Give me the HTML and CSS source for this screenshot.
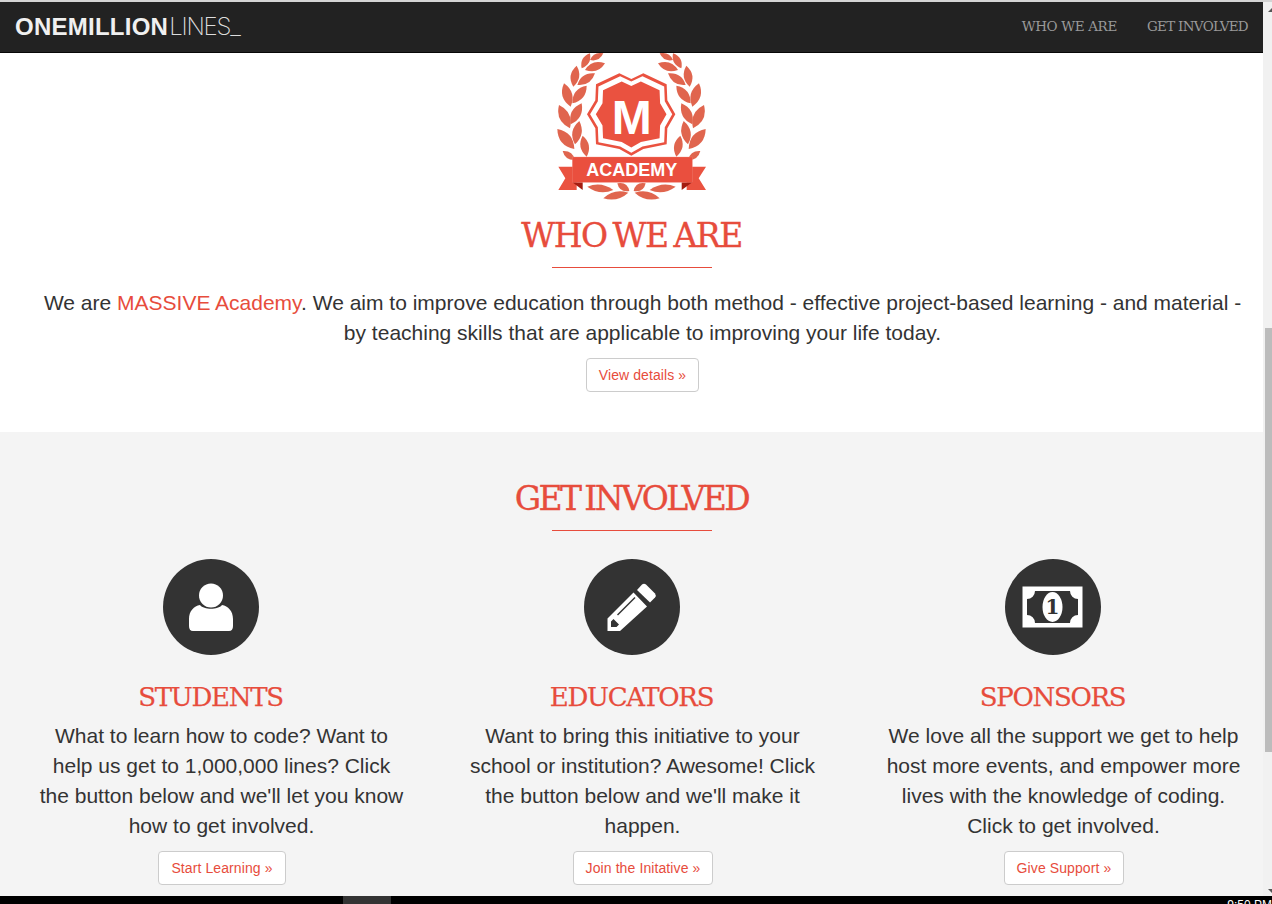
FILE: index.html
```html
<!DOCTYPE html>
<html lang="en">
<head>
<meta charset="utf-8">
<title>One Million Lines</title>
<link rel="stylesheet" href="styles.css">
</head>
<body>
<div class="topline"></div>
<div class="window">
  <div class="page">
    <nav class="navbar">
      <a class="brand" href="#"><b>ONEMILLION</b><span>LINES_</span></a>
      <div class="navlinks">
        <a href="#">WHO WE ARE</a>
        <a href="#">GET INVOLVED</a>
      </div>
    </nav>
    <main class="content">
      <section class="about">
        <svg class="logo" viewBox="51 21 450 444" width="150" height="148" aria-label="Massive Academy">
          <defs>
            <g id="leaves">
              <path d="M125 70Q118 37 150 25Q156 58 125 70Z"/>
              <path d="M150 45Q161 19 190 25Q178 51 150 45Z"/>
              <path d="M135 75Q156 41 195 55Q174 89 135 75Z"/>
              <path d="M100 125Q79 90 110 62Q130 97 100 125Z"/>
              <path d="M112 120Q124 81 165 85Q152 124 112 120Z"/>
              <path d="M92 185Q53 158 72 115Q110 142 92 185Z"/>
              <path d="M97 175Q97 130 140 122Q140 165 97 175Z"/>
              <path d="M90 250Q45 228 57 180Q101 201 90 250Z"/>
              <path d="M92 238Q83 193 125 175Q133 220 92 238Z"/>
              <path d="M103 312Q53 302 52 252Q101 261 103 312Z"/>
              <path d="M105 298Q83 258 118 228Q138 268 105 298Z"/>
              <path d="M140 335Q109 307 128 272Q159 298 140 335Z"/>
              <path d="M105 345Q75 346 68 318Q98 316 105 345Z"/>
              <path d="M142 425Q183 408 220 435Q179 452 142 425Z"/>
              <path d="M232 415Q262 409 268 438Q238 443 232 415Z"/>
              <path d="M190 460Q222 430 265 443Q233 472 190 460Z"/>
            </g>
            <path id="badge" d="M238 85L274 102L310 85L380 118L382 166L406 208L382 250L380 298L310 312L274 332L238 312L168 298L166 250L141 208L166 166L168 118Z"/>
          </defs>
          <g class="logo-leaf">
            <use href="#leaves"/>
            <use href="#leaves" transform="translate(549 0) scale(-1 1)"/>
          </g>
          <use href="#badge" class="logo-red"/>
          <use href="#badge" class="logo-white" transform="translate(273.5 208) scale(.93) translate(-273.5 -208)"/>
          <use href="#badge" class="logo-red" transform="translate(273.5 208) scale(.8) translate(-273.5 -208)"/>
          <text x="275" y="268" text-anchor="middle" class="logo-m">M</text>
          <path class="logo-red" d="M55 365H110V435H55L76 400Z"/>
          <path class="logo-red" d="M498 365H440V435H498L476 400Z"/>
          <path class="logo-dark" d="M97 412H128V435Z"/>
          <path class="logo-dark" d="M457 412H425V435Z"/>
          <rect class="logo-band" x="97" y="336" width="360" height="76"/>
          <text x="275" y="392" text-anchor="middle" class="logo-academy">ACADEMY</text>
        </svg>
        <h2 class="heading">WHO WE ARE</h2>
        <div class="rule"></div>
        <p class="lead">We are <a href="#">MASSIVE Academy</a>. We aim to improve education through both method - effective project-based learning - and material - by teaching skills that are applicable to improving your life today.</p>
        <div class="lead-action"><a class="btn" href="#">View details »</a></div>
      </section>
      <section class="involved">
        <h2 class="heading heading-tight">GET INVOLVED</h2>
        <div class="rule"></div>
        <div class="columns">
          <article class="col">
            <div class="icon">
              <svg viewBox="0 0 96 96" width="96" height="96">
                <circle cx="48" cy="36.5" r="12"/>
                <path d="M30 72Q26 72 26 67V60C26 52 31 47 37 46C41 51 55 51 59 46C65 47 70 52 70 60V67Q70 72 66 72Z"/>
              </svg>
            </div>
            <h3>STUDENTS</h3>
            <p>What to learn how to code? Want to help us get to 1,000,000 lines? Click the button below and we'll let you know how to get involved.</p>
            <div class="action"><a class="btn" href="#">Start Learning »</a></div>
          </article>
          <article class="col">
            <div class="icon">
              <svg viewBox="0 0 96 96" width="96" height="96">
                <path d="M53 31L58 25.500Q60 24 62 25.500L71 34.500Q72.500 36.500 71 38.500L66 43.500Z"/>
                <path fill-rule="evenodd" d="M49.500 33.500L63 47.500L36 72H23.500V59.500ZM50.500 38L33 55.500L34 56.500L51.500 39ZM27 62.500V68H32.500L35 65.500L29.500 60Z"/>
              </svg>
            </div>
            <h3>EDUCATORS</h3>
            <p>Want to bring this initiative to your school or institution? Awesome! Click the button below and we'll make it happen.</p>
            <div class="action"><a class="btn" href="#">Join the Initative »</a></div>
          </article>
          <article class="col">
            <div class="icon">
              <svg viewBox="0 0 96 96" width="96" height="96">
                <path fill-rule="evenodd" d="M17.500 27.500H77.500V68.500H17.500ZM30 32H65A8 8 0 0 0 73 40V56A8 8 0 0 0 65 64H30A8 8 0 0 0 22 56V40A8 8 0 0 0 30 32Z"/>
                <ellipse cx="47.500" cy="48" rx="10" ry="15"/>
                <text x="47.500" y="55" text-anchor="middle" class="bill-digit">1</text>
              </svg>
            </div>
            <h3>SPONSORS</h3>
            <p>We love all the support we get to help host more events, and empower more lives with the knowledge of coding. Click to get involved.</p>
            <div class="action"><a class="btn" href="#">Give Support »</a></div>
          </article>
        </div>
      </section>
    </main>
  </div>
  <div class="scrollbar">
    <div class="arrow arrow-up"></div>
    <div class="thumb"></div>
    <div class="arrow arrow-down"></div>
  </div>
</div>
<footer class="taskbar">
  <div class="task"></div>
  <div class="clock">9:50 PM</div>
</footer>
</body>
</html>
```

FILE: styles.css
```css
* { box-sizing: border-box; }
html, body { margin: 0; height: 904px; overflow: hidden; }
body {
  display: flex;
  flex-direction: column;
  background: #fff;
  color: #333;
  font-family: "Liberation Sans", Arial, sans-serif;
}
a { text-decoration: none; color: #e74c3c; }

.topline { height: 2px; background: #d4d4d4; flex: none; }
.window { flex: 1; display: flex; min-height: 0; }
.page { flex: 1; min-width: 0; display: flex; flex-direction: column; overflow: hidden; }

.navbar {
  flex: none;
  height: 51px;
  background: #222;
  border-bottom: 1px solid #080808;
  display: flex;
  align-items: center;
  justify-content: space-between;
  padding: 0 15px;
}
.brand { font-size: 24px; line-height: 48px; color: #f0f0f0; }
.brand b { font-family: "Liberation Sans", Arial, sans-serif; font-weight: 700; letter-spacing: .25px; }
.brand span { font-family: Inter, sans-serif; font-weight: 200; letter-spacing: -1.2px; color: #ddd; margin-left: 1px; }
.navlinks { display: flex; gap: 30px; padding-bottom: 2px; }
.navlinks a {
  font-family: "DejaVu Serif", serif;
  font-size: 13.500px;
  color: #999;
  letter-spacing: -.35px;
}
.navlinks a + a { letter-spacing: -.7px; }

.content { flex: 1; display: flex; flex-direction: column; min-height: 0; }
.about {
  flex: none;
  height: 379px;
  display: flex;
  flex-direction: column;
  align-items: center;
  background: #fff;
}
.logo { display: block; flex: none; margin-top: -1px; }
.logo-leaf { fill: #e0654e; }
.logo-red { fill: #ea5240; }
.logo-white { fill: #fff; }
.logo-band { fill: #ea4f3e; stroke: #f08a7c; stroke-width: 1; }
.logo-dark { fill: #a31c10; }
.logo-m, .logo-academy { fill: #fff; font-family: "Liberation Sans", Arial, sans-serif; font-weight: 700; }
.logo-m { font-size: 144px; }
.logo-academy { font-size: 54px; }

.heading {
  margin: 16px 0 0;
  font-family: "DejaVu Serif", serif;
  font-weight: 400;
  font-size: 33px;
  line-height: 40px;
  color: #e74c3c;
  letter-spacing: -1.5px;
  word-spacing: -3px;
  -webkit-text-stroke: .35px #e74c3c;
}
.heading-tight { letter-spacing: -2.6px; }
.rule { width: 160px; height: 1px; background: #e74c3c; margin-top: 11px; flex: none; }

.lead {
  align-self: stretch;
  margin: 20px 16px 0 38px;
  font-size: 21px;
  line-height: 30px;
  text-align: center;
}
.lead-action { align-self: stretch; margin: 10px 0 0 22px; display: flex; justify-content: center; }

.btn {
  display: inline-block;
  height: 34px;
  padding: 0 12px;
  font-size: 14px;
  line-height: 32px;
  letter-spacing: .1px;
  color: #e74c3c;
  background: #fff;
  border: 1px solid #ccc;
  border-radius: 4px;
  white-space: nowrap;
}

.involved {
  flex: 1;
  background: #f4f4f4;
  padding-top: 31px;
  display: flex;
  flex-direction: column;
  align-items: center;
}
.columns { align-self: stretch; display: grid; grid-template-columns: repeat(3, 1fr); margin-top: 28px; }
.col { display: flex; flex-direction: column; align-items: center; min-width: 0; }
.icon {
  width: 96px;
  height: 96px;
  border-radius: 50%;
  background: #333;
  flex: none;
}
.icon svg { display: block; fill: #fff; }
.bill-digit { font-family: "DejaVu Serif", serif; font-weight: 700; font-size: 20px; fill: #333; }
.col h3 {
  margin: 27px 0 0;
  font-family: "DejaVu Serif", serif;
  font-weight: 400;
  font-size: 26px;
  line-height: 30px;
  letter-spacing: -1.3px;
  color: #e74c3c;
  -webkit-text-stroke: .25px #e74c3c;
}
.col p {
  align-self: stretch;
  margin: 9px 15px 0 37px;
  font-size: 21px;
  line-height: 30px;
  text-align: center;
}
.action { margin: 10px 0 0 23px; display: flex; justify-content: center; }

.scrollbar {
  flex: none;
  width: 9px;
  background: #f1f1f1;
  display: flex;
  flex-direction: column;
  align-items: flex-end;
  position: relative;
}
.thumb { width: 7px; height: 424px; background: #bcbcbc; margin-top: 326px; }
.arrow { position: absolute; right: 0; width: 0; height: 0; border-left: 4px solid transparent; }
.arrow-up { top: 6px; border-bottom: 4px solid #555; }
.arrow-down { bottom: 3px; border-top: 4px solid #555; }

.taskbar {
  flex: none;
  height: 8px;
  background: #000;
  display: flex;
  justify-content: space-between;
  overflow: hidden;
  padding: 0 0 0 343px;
}
.task { width: 48px; height: 8px; background: #333; }
.clock { color: #fff; font-size: 12px; line-height: 12px; padding-top: 3px; white-space: nowrap; }
```
